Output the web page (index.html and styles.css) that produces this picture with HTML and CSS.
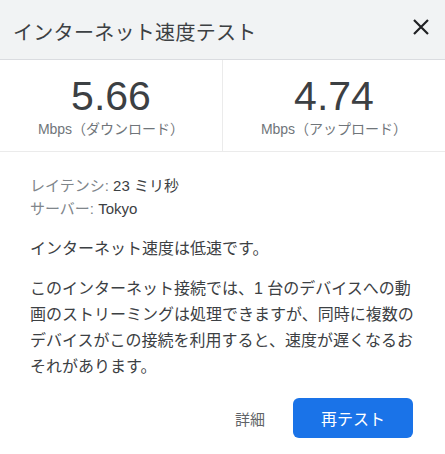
FILE: index.html
```html
<!DOCTYPE html>
<html lang="ja">
<head>
<meta charset="UTF-8">
<meta name="viewport" content="width=device-width">
<title>インターネット速度テスト</title>
<link rel="stylesheet" href="styles.css">
</head>
<body>
<div class="dialog">
  <div class="header">
    <h1 class="title">インターネット速度テスト</h1>
    <button class="close" aria-label="閉じる">
      <svg width="18" height="18" viewBox="0 0 18 18"><path d="M2 2 L16 16 M16 2 L2 16" stroke="#202124" stroke-width="2.2" fill="none"/></svg>
    </button>
  </div>

  <div class="stats">
    <div class="stat">
      <div class="value">5.66</div>
      <div class="unit">Mbps（ダウンロード）</div>
    </div>
    <div class="stat">
      <div class="value">4.74</div>
      <div class="unit">Mbps（アップロード）</div>
    </div>
  </div>

  <div class="body">
    <div class="meta">
      <div><span class="label">レイテンシ:</span> 23 ミリ秒</div>
      <div><span class="label">サーバー:</span> Tokyo</div>
    </div>
    <p class="summary">インターネット速度は低速です。</p>
    <p class="detail">このインターネット接続では、1 台のデバイスへの動画のストリーミングは処理できますが、同時に複数のデバイスがこの接続を利用すると、速度が遅くなるおそれがあります。</p>
  </div>

  <div class="actions">
    <button class="link">詳細</button>
    <button class="primary">再テスト</button>
  </div>
</div>
</body>
</html>
```

FILE: styles.css
```css
body {
  margin: 0;
  font-family: "Liberation Sans", Arial, "Noto Sans CJK JP", sans-serif;
  background: #ffffff;
  color: #3c4043;
}
.dialog {
  width: 445px;
  height: 454px;
  background: #ffffff;
}
.header {
  height: 60px;
  background: #f1f3f4;
  border-bottom: 1px solid #dadce0;
  display: flex;
  align-items: center;
  justify-content: space-between;
  padding: 0 15px 0 13px;
  box-sizing: border-box;
}
.title {
  margin: 0;
  font-size: 20px;
  font-weight: normal;
  color: #3c4043;
  letter-spacing: 0.3px;
  padding-top: 4px;
}
.close {
  border: none;
  background: none;
  padding: 0;
  margin-top: -6px;
  display: flex;
}
.stats {
  display: flex;
  border-bottom: 1px solid #ebebeb;
  height: 91px;
}
.stat {
  flex: 1;
  text-align: center;
  padding-top: 15px;
}
.stat + .stat {
  border-left: 1px solid #ebebeb;
}
.value {
  font-size: 41px;
  line-height: 42px;
  color: #3c4043;
}
.unit {
  font-size: 14px;
  color: #70757a;
  margin-top: 1px;
}
.body {
  padding: 22px 30px 0 30px;
}
.meta {
  font-size: 15px;
  line-height: 23px;
  color: #3c4043;
}
.label {
  color: #80868b;
}
.summary {
  font-size: 16px;
  margin: 17px 0 0 0;
  line-height: 24px;
}
.detail {
  font-size: 16px;
  line-height: 26px;
  margin: 15px 0 0 0;
}
.actions {
  display: flex;
  justify-content: flex-end;
  align-items: center;
  gap: 28px;
  padding: 18px 32px 0 0;
}
.link {
  border: none;
  background: none;
  font: inherit;
  font-size: 15px;
  color: #5f6368;
  padding: 0;
}
.primary {
  border: none;
  background: #1a73e8;
  color: #ffffff;
  font: inherit;
  font-size: 16px;
  width: 120px;
  height: 40px;
  border-radius: 6px;
}
```
